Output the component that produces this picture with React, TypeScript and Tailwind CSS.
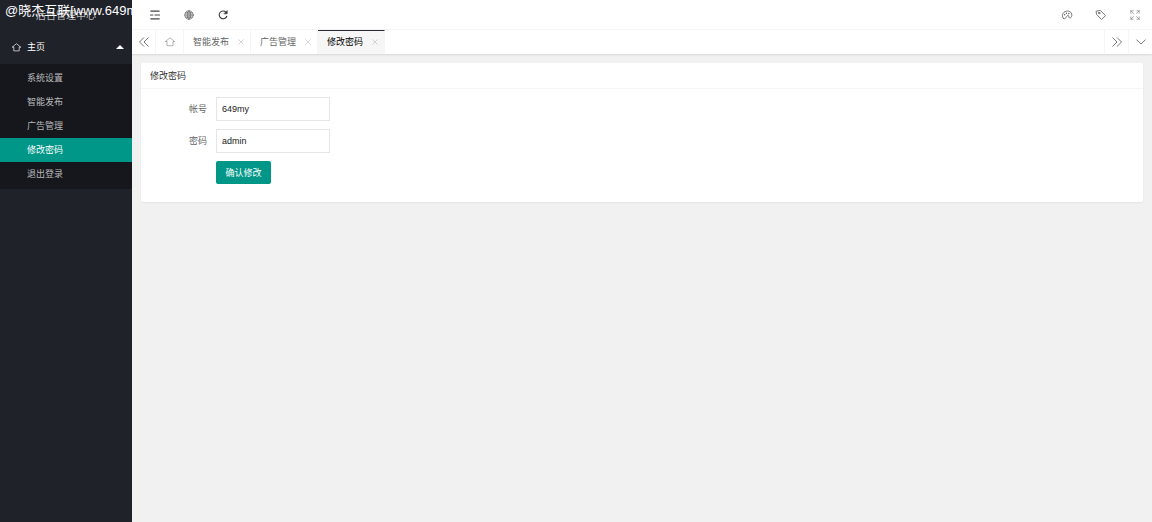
import React, { useState } from 'react';
import { clsx } from 'clsx';

const menu = ['系统设置', '智能发布', '广告管理', '修改密码', '退出登录'];
const openTabs = ['智能发布', '广告管理', '修改密码'];

const Icon: React.FC<{ className?: string; children: React.ReactNode }> = ({ className, children }) => (
  <svg
    viewBox="0 0 20 20"
    fill="none"
    stroke="currentColor"
    strokeWidth="1.5"
    strokeLinecap="round"
    strokeLinejoin="round"
    className={clsx('shrink-0', className)}
    aria-hidden="true"
  >
    {children}
  </svg>
);

const HomeIcon: React.FC<{ className?: string }> = ({ className }) => (
  <Icon className={className}>
    <path d="M1 9 10 1.500 19 9M1 9h3v8.500h12V9h3" />
  </Icon>
);

const CloseIcon = () => (
  <Icon className="h-2 w-2">
    <path d="m4 4 12 12M16 4 4 16" />
  </Icon>
);

const Sidebar: React.FC<{ active: string; onSelect: (name: string) => void }> = ({ active, onSelect }) => (
  <aside className="relative w-[132px] shrink-0 overflow-hidden bg-[#20222a]">
    <h1 className="h-[30px] text-center text-[10px] leading-[30px] text-white/70">后台管理中心</h1>
    {/* Site mark laid over the title */}
    <div className="absolute left-[5px] top-0 whitespace-nowrap font-['Liberation_Sans','Noto_Sans_CJK_SC',sans-serif] text-[13px] leading-[22px] text-white">
      @晓杰互联[www.649my.com]
    </div>
    <button type="button" className="flex h-[34px] w-full items-center pl-3 pr-2 text-[9px] text-white">
      <HomeIcon className="mr-[6px] h-[9px] w-[9px]" />
      主页
      <svg viewBox="0 0 8 4" className="ml-auto h-1 w-2" aria-hidden="true">
        <path d="M4 0 8 4H0z" fill="currentColor" />
      </svg>
    </button>
    <nav className="bg-[#16171c] pb-[3px] pt-[2px]">
      {menu.map((name) => (
        <a
          key={name}
          href="#"
          onClick={() => onSelect(name)}
          className={clsx(
            'block h-6 pl-[27px] text-[9px] leading-6',
            name === active ? 'bg-[#009688] text-white' : 'text-white/70'
          )}
        >
          {name}
        </a>
      ))}
    </nav>
  </aside>
);

const TopBar = () => (
  <header className="flex h-[30px] items-center justify-between border-b border-[#f6f6f6] bg-white pl-[17px] pr-[11px] pt-px text-[#444]">
    <div className="flex items-center gap-[22px]">
      <button type="button" aria-label="侧边伸缩">
        <Icon className="h-3 w-3">
          <path d="M3 3.500h14M2.500 10h4M10 10h7.500M3 16.500h14" strokeWidth="1.800" />
        </Icon>
      </button>
      <button type="button" aria-label="前台">
        <Icon className="h-3 w-3 text-[#777]">
          <circle cx="10" cy="10" r="7" />
          <ellipse cx="10" cy="10" rx="3" ry="7" />
          <path d="M3 10h14M4 6.500h12M4 13.500h12M10 3v14" />
        </Icon>
      </button>
      <button type="button" aria-label="刷新">
        <Icon className="h-3 w-3 text-[#333]">
          <path d="M15 5.500A6.500 6.500 0 1 0 16.300 12" strokeWidth="1.800" />
          <path d="M17 3v5h-5z" fill="currentColor" strokeWidth="1" />
        </Icon>
      </button>
    </div>
    <div className="flex items-center gap-[22px] text-[#666]">
      <button type="button" aria-label="主题">
        <Icon className="h-3 w-3">
          <path d="M4.500 16C1 13.500 1.500 7 6.500 4.500c6-3 12 .5 11.500 6-.3 3.500-2.500 5-4 4.500-1.700-.6 0-4-2-4.500-3-.7-3 7.500-7.500 5.500z" />
          <path d="M6 9.500v.1M9 7v.1M13 7.500v.1" strokeWidth="2.500" />
        </Icon>
      </button>
      <button type="button" aria-label="便签">
        <Icon className="h-3 w-3">
          <path d="M2.500 3.500 9 2.500l8.500 8.500-6.500 6.500L3 9.500z" />
          <circle cx="6.800" cy="6.800" r="1.300" />
        </Icon>
      </button>
      <button type="button" aria-label="全屏" className="text-[#888]">
        <Icon className="h-3 w-3">
          <path d="M3 7V3h4M3 3l4.500 4.500M13 3h4v4M17 3l-4.500 4.500M3 13v4h4M3 17l4.500-4.500M13 17h4v-4M17 17l-4.500-4.500" strokeWidth="1.200" />
        </Icon>
      </button>
    </div>
  </header>
);

const TabBar: React.FC<{ active: string; onSelect: (name: string) => void }> = ({ active, onSelect }) => (
  <div className="flex h-6 bg-white text-[9px] text-[#666] shadow-[0_1px_2px_rgba(0,0,0,0.1)]">
    <button type="button" aria-label="向左" className="flex w-6 items-center justify-center border-r border-[#f6f6f6]">
      <Icon className="h-3 w-3">
        <path d="m9.500 3-7 7 7 7M17 3l-7 7 7 7" />
      </Icon>
    </button>
    <button type="button" aria-label="主页" className="flex w-7 items-center justify-center border-r border-[#f6f6f6] text-[#999]">
      <HomeIcon className="h-[10px] w-[10px]" />
    </button>
    {openTabs.map((name) => (
      <div
        key={name}
        className={clsx(
          'flex w-[67px] items-center justify-between border-r border-t border-r-[#f6f6f6] pb-px pl-[9px] pr-[5px]',
          name === active ? 'border-t-[#292b34] bg-[#f6f6f6] text-black' : 'border-t-transparent'
        )}
      >
        <button type="button" onClick={() => onSelect(name)}>{name}</button>
        <button type="button" aria-label={`关闭${name}`} className="text-[#bbb]">
          <CloseIcon />
        </button>
      </div>
    ))}
    <button type="button" aria-label="向右" className="ml-auto flex w-6 items-center justify-center border-l border-[#f6f6f6]">
      <Icon className="h-3 w-3">
        <path d="m3 3 7 7-7 7M10.500 3l7 7-7 7" />
      </Icon>
    </button>
    <button type="button" aria-label="更多" className="flex w-6 items-center justify-center border-l border-[#f6f6f6]">
      <Icon className="h-3 w-3">
        <path d="m3 6.500 7 7 7-7" />
      </Icon>
    </button>
  </div>
);

const Field: React.FC<{ id: string; label: string; value: string }> = ({ id, label, value }) => (
  <div className="flex items-center">
    <label htmlFor={id} className="w-[75px] pr-[9px] text-right leading-6 text-[#666]">{label}</label>
    <input
      id={id}
      type="text"
      defaultValue={value}
      className="h-6 w-[114px] border border-[#e6e6e6] bg-white px-[5px] font-['Liberation_Sans','Noto_Sans_CJK_SC',sans-serif] text-[#222] outline-none"
    />
  </div>
);

const PasswordCard = () => (
  <section className="rounded-xs bg-white text-[9px] shadow-[0_1px_2px_rgba(0,0,0,0.05)]">
    <h2 className="h-[26px] border-b border-[#f6f6f6] px-[9px] leading-[25px] text-[#333]">修改密码</h2>
    <form className="flex flex-col gap-2 pb-[18px] pt-2" onSubmit={(e) => e.preventDefault()}>
      <Field id="account" label="帐号" value="649my" />
      <Field id="password" label="密码" value="admin" />
      <button type="submit" className="ml-[75px] h-[23px] w-[55px] rounded-xs bg-[#009688] text-white">
        确认修改
      </button>
    </form>
  </section>
);

const App = () => {
  const [active, setActive] = useState('修改密码');

  return (
    <div className="flex min-h-screen bg-[#f1f1f1] font-['Noto_Sans_CJK_SC',sans-serif]">
      <Sidebar active={active} onSelect={setActive} />
      <div className="min-w-0 flex-1">
        <TopBar />
        <TabBar active={active} onSelect={setActive} />
        <main className="px-[9px] py-[9px]">
          <PasswordCard />
        </main>
      </div>
    </div>
  );
};

export default App;
